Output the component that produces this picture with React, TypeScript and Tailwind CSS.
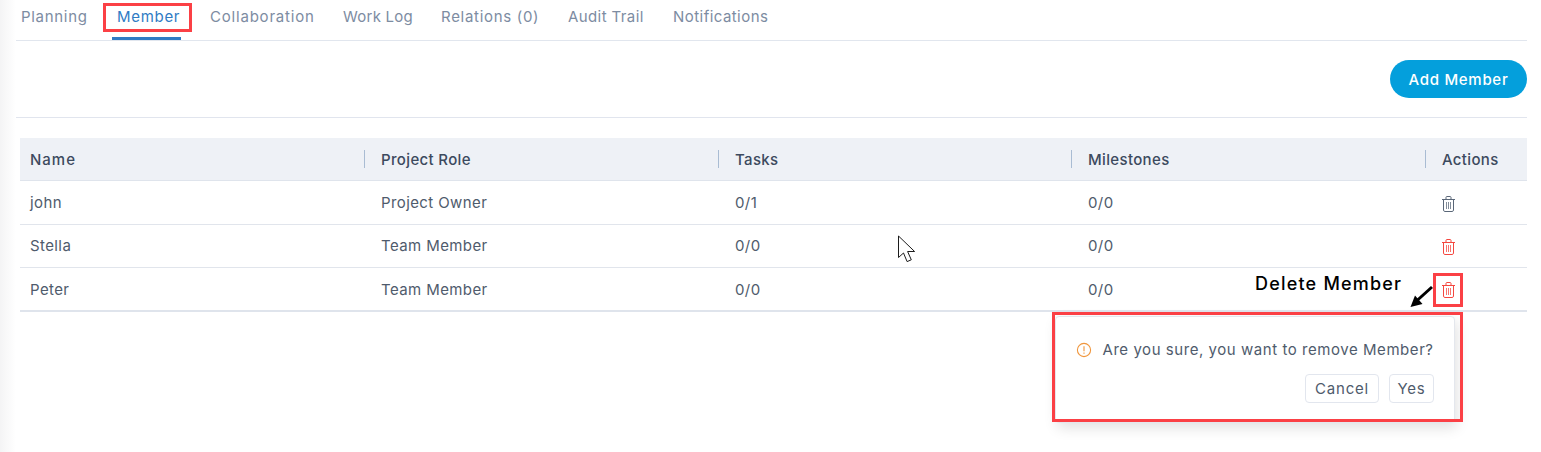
import React from "react";

const tabs = [
  { label: "Planning", width: "w-[96px]", pad: "pl-[5px]", tracking: "tracking-[0.7px]" },
  { label: "Member", width: "w-[98px]", pad: "pl-[5px]", tracking: "tracking-[0.7px]", active: true },
  { label: "Collaboration", width: "w-[133px]", pad: "", tracking: "tracking-[0.8px]" },
  { label: "Work Log", width: "w-[98px]", pad: "", tracking: "tracking-[0.25px]" },
  { label: "Relations (0)", width: "w-[127px]", pad: "", tracking: "tracking-[0.7px]" },
  { label: "Audit Trail", width: "w-[105px]", pad: "", tracking: "tracking-[0.4px]" },
  { label: "Notifications", width: "w-[110px]", pad: "", tracking: "tracking-[0.45px]" },
];

const members = [
  { name: "john", role: "Project Owner", tasks: "0/1", milestones: "0/0", icon: "text-[#5a6778]", h: "h-[44px]", nudge: "pt-[2px]" },
  { name: "Stella", role: "Team Member", tasks: "0/0", milestones: "0/0", icon: "text-[#f4473f]", h: "h-[43px]", nudge: "" },
  { name: "Peter", role: "Team Member", tasks: "0/0", milestones: "0/0", icon: "text-[#f4473f]", h: "h-[42px]", nudge: "pt-[2px]" },
];

const columns = "grid grid-cols-[345px_354px_353px_354px_1fr]";

const TrashIcon = ({ className }: { className: string }) => (
  <svg width="13" height="16" viewBox="0 0 13 16" fill="none" stroke="currentColor" strokeWidth="1" className={className}>
    <path d="M0 3.5h13" />
    <path d="M4 3.5V1.4c0-.5.4-.9.9-.9h3.2c.5 0 .9.4.9.9v2.1" />
    <path d="M1.5 3.5v10.6c0 .8.6 1.4 1.4 1.4h7.2c.8 0 1.4-.6 1.4-1.4V3.5" />
    <path d="M4.5 6v7M6.5 6v7M8.5 6v7" opacity="0.75" />
  </svg>
);

export default function App() {
  return (
    <div className="relative flex h-[452px] w-[1541px] overflow-hidden bg-white font-['Inter',sans-serif] text-[15px] tracking-[0.4px] text-[#4f5b6c]">
      <div className="w-4 bg-linear-to-r from-[#f4f4f5] to-white" />
      <div className="flex-1 pr-[14px]">
        <div className="box-content flex h-[25px] border-b border-[#e1e6ee] pt-[15px] text-[#7d8ca2]">
          {tabs.map((tab) => (
            <div key={tab.label} className={`${tab.width} ${tab.pad} ${tab.tracking} h-[25px]`}>
              <span
                className={
                  tab.active
                    ? "-ml-[5px] block h-[25px] w-[69px] border-b-[3px] border-[#2f7bc4] pl-[5px] leading-[3px] text-[#2f7bc4]"
                    : "block leading-[3px]"
                }
              >
                {tab.label}
              </span>
            </div>
          ))}
        </div>

        <div className="flex h-[77px] justify-end border-b border-[#e1e5ee] pt-[19px]">
          <button className="h-[38px] w-[137px] rounded-full bg-[#049fdc] pt-[2px] text-[15px] font-medium tracking-[0.7px] text-white">
            Add Member
          </button>
        </div>

        <div className="ml-1 mt-5 border-b-2 border-[#dfe4ec]">
          <div className={`${columns} h-[43px] border-b border-[#dfe4ec] bg-[#eef1f6] font-medium tracking-[0.35px] text-[#3c4a5e]`}>
            <div className="flex items-center pl-[10px] pt-[2px] tracking-[1px]">Name</div>
            {["Project Role", "Tasks", "Milestones", "Actions"].map((title) => (
              <div key={title} className="flex items-center">
                <span className="-ml-px flex h-[18px] items-center border-l border-[#a9bcd3] pl-[16px]">
                  <span className="pt-[2px]">{title}</span>
                </span>
              </div>
            ))}
          </div>
          {members.map((member, i) => (
            <div
              key={member.name}
              className={`${columns} ${member.h} items-center ${i < members.length - 1 ? "border-b border-[#e1e5ec]" : ""}`}
            >
              <div className={`pl-[10px] ${member.nudge}`}>{member.name}</div>
              <div className={`pl-4 ${member.nudge}`}>{member.role}</div>
              <div className={`pl-4 ${member.nudge}`}>{member.tasks}</div>
              <div className={`pl-4 ${member.nudge}`}>{member.milestones}</div>
              <div className="pl-[16px] pt-[2px]">
                <TrashIcon className={member.icon} />
              </div>
            </div>
          ))}
        </div>
      </div>

      {/* annotations and the confirm popover lie over the page */}
      <div className="absolute left-[103px] top-[3px] h-[29px] w-[89px] border-[3px] border-[#fb4045]" />

      <svg width="22" height="30" viewBox="0 0 22 30" className="absolute left-[897px] top-[235px]">
        <path
          d="M1.5 1v21.5l5-4.5 3.6 8.6 4.2-1.8-3.7-8.3h7z"
          fill="white"
          stroke="#1c1c1c"
          strokeWidth="1"
          strokeLinejoin="miter"
        />
      </svg>

      <div className="absolute left-[1255px] top-[272px] text-[18px] font-medium leading-[24px] tracking-[1.2px] text-black">
        Delete Member
      </div>
      <svg width="26" height="24" viewBox="0 0 26 24" className="absolute left-[1409px] top-[285px]">
        <path d="M23 2 7.5 16" stroke="black" strokeWidth="3" />
        <path d="M1.5 22 6 10.5l7.5 8.5z" fill="black" />
      </svg>
      <div className="absolute left-[1433px] top-[273px] h-[34px] w-[30px] border-[3px] border-[#fb4045]" />

      <div className="absolute left-[1055px] top-[316px] h-[107px] w-[400px] rounded-[4px] border border-[#e4e7ed] bg-white shadow-[2px_5px_14px_rgba(0,0,0,0.12)]">
        <div className="flex items-center pl-[20px] pt-[23px]">
          <svg width="16" height="16" viewBox="0 0 16 16" fill="none" stroke="#f0963c" strokeWidth="1.1" className="-ml-[0.5px] mr-[11px] shrink-0">
            <circle cx="8" cy="8" r="6.6" />
            <path d="M8 4.2v5M8 10.6v1.2" />
          </svg>
          <span className="whitespace-nowrap leading-[20px] tracking-[0.55px]">Are you sure, you want to remove Member?</span>
        </div>
        <div className="mr-5 mt-[14px] flex justify-end gap-[10px] tracking-[0.8px]">
          <button className="h-[29px] w-[74px] rounded-[4px] border border-[#e2e6ee] pt-[2px]">Cancel</button>
          <button className="h-[29px] w-[45px] rounded-[4px] border border-[#e2e6ee] pt-[2px]">Yes</button>
        </div>
      </div>
      <div className="absolute left-[1052px] top-[312px] h-[110px] w-[411px] border-[3px] border-[#fb4045]" />
    </div>
  );
}
